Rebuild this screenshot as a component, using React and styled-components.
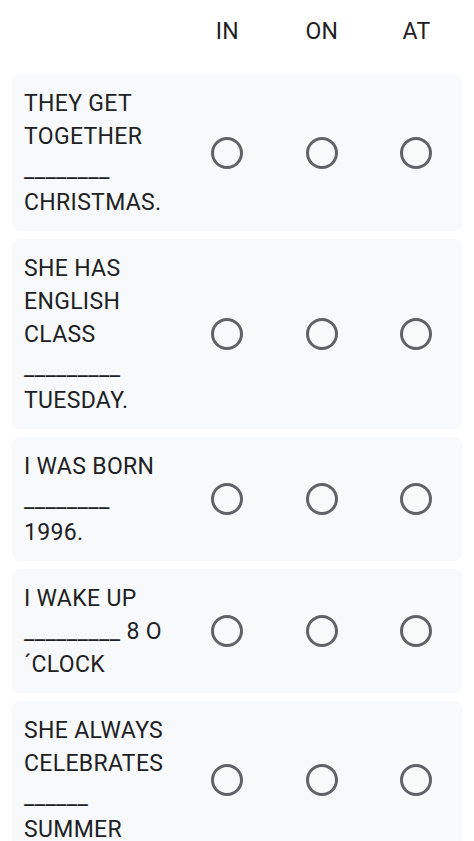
import React from "react";
import styled, { createGlobalStyle } from "styled-components";

const Global = createGlobalStyle`
  html, body { margin: 0; padding: 0; background: #ffffff; }
  body { font-family: Roboto, "Liberation Sans", Arial, sans-serif; color: #202124; }
`;

const Page = styled.div`
  display: flex;
  flex-direction: column;
  gap: 8px;
  padding: 0 12px;
`;

const Grid = styled.div`
  display: grid;
  grid-template-columns: 156px repeat(3, 94.6px);
  align-items: center;
`;

const Header = styled(Grid)`
  padding: 15px 0 18px 12px;
`;

const ColLabel = styled.div`
  font-size: 23px;
  line-height: 33px;
  letter-spacing: 0.33px;
  text-align: center;
  color: #202124;
`;

const Card = styled(Grid)`
  background: #f8f9fa;
  border-radius: 8px;
  padding: 12.5px 0 12.5px 12px;
`;

const Question = styled.div`
  font-size: 23px;
  line-height: 33px;
  letter-spacing: 0.33px;
  color: #202124;
  padding-right: 10px;
  word-wrap: break-word;
`;

const Cell = styled.div`
  display: flex;
  justify-content: center;
  align-items: center;
`;

const Radio = styled.div`
  width: 32px;
  height: 32px;
  box-sizing: border-box;
  border: 3px solid #5f6368;
  border-radius: 50%;
`;

const columns = ["IN", "ON", "AT"];
const rows = [
  "THEY GET TOGETHER ________ CHRISTMAS.",
  "SHE HAS ENGLISH CLASS _________ TUESDAY.",
  "I WAS BORN ________ 1996.",
  "I WAKE UP _________ 8 O ´CLOCK",
  "SHE ALWAYS CELEBRATES ______ SUMMER",
];

export default function App() {
  return (
    <>
      <Global />
      <Page>
        <Header>
          <div />
          {columns.map((c) => (
            <ColLabel key={c}>{c}</ColLabel>
          ))}
        </Header>
        {rows.map((r) => (
          <Card key={r}>
            <Question>{r}</Question>
            {columns.map((c) => (
              <Cell key={c}>
                <Radio />
              </Cell>
            ))}
          </Card>
        ))}
      </Page>
    </>
  );
}
